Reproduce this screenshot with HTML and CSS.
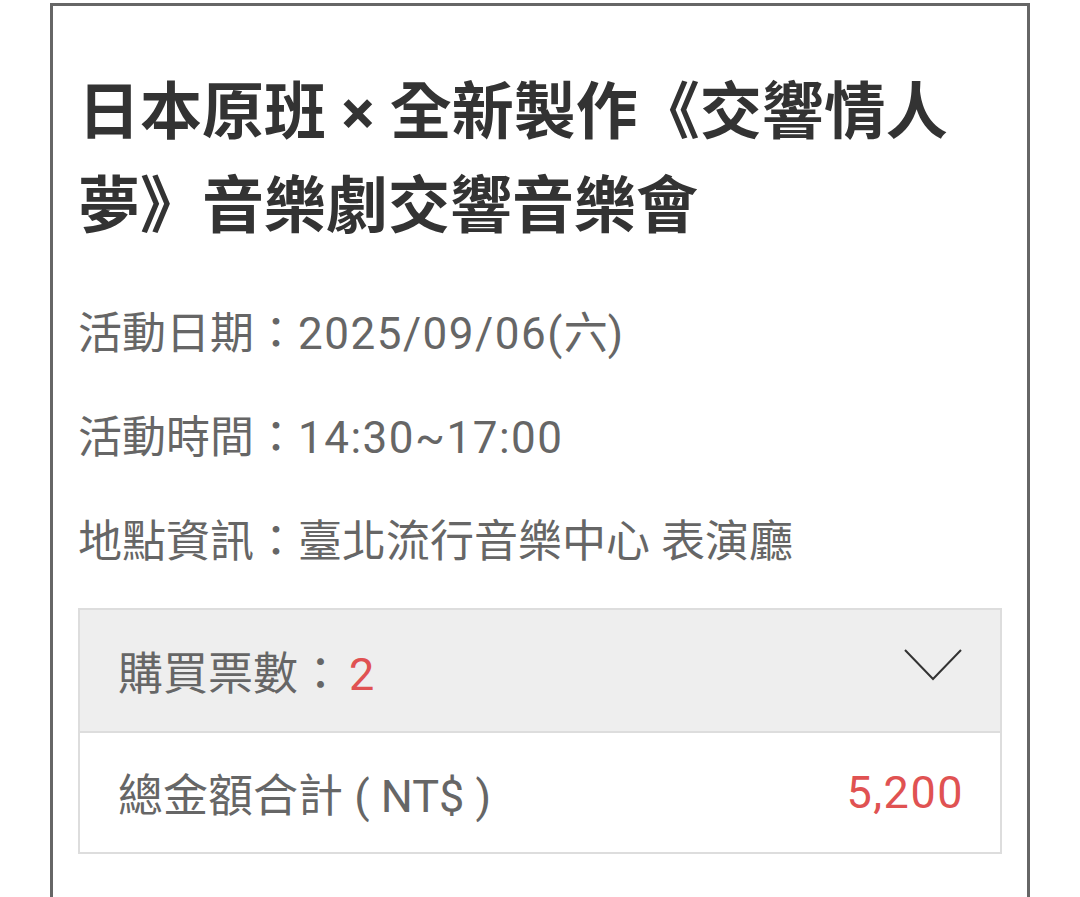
FILE: index.html
```html
<!DOCTYPE html>
<html lang="zh-Hant">
<head>
    <meta charset="UTF-8">
    <title>交響情人夢 音樂劇交響音樂會</title>
    <link rel="stylesheet" href="styles.css">
</head>
<body>

<div class="frame">
    <h1 class="event-title">日本原班 × 全新製作《交響情人夢》音樂劇交響音樂會</h1>

    <div class="info">
        <p>活動日期：<span class="num">2025/09/06(</span>六<span class="num">)</span></p>
        <p>活動時間：<span class="num">14:30~17:00</span></p>
        <p>地點資訊：臺北流行音樂中心 表演廳</p>
    </div>

    <div class="ticket-box">
        <div class="ticket-row qty">
            <span>購買票數：<em class="red num qty-num">2</em></span>
            <svg class="chevron" width="58" height="32" viewBox="0 0 58 32">
                <polyline points="1,1 29,30 57,1" fill="none" stroke="#333" stroke-width="2"/>
            </svg>
        </div>
        <div class="ticket-row total">
            <span>總金額合計 ( NT$ )</span>
            <span class="red num">5,200</span>
        </div>
    </div>
</div>

</body>
</html>
```

FILE: styles.css
```css
body {
    margin: 0;
    background-color: #fff;
    font-family: Roboto, "Noto Sans CJK TC", sans-serif;
}
.frame {
    box-sizing: border-box;
    width: 980px;
    min-height: 894px;
    margin: 3px 0 0 50px;
    padding: 60px 25px 0;
    border: 3px solid #666;
    border-bottom: none;
}
.event-title {
    margin: 0;
    font-size: 62px;
    line-height: 94px;
    font-weight: 700;
    color: #333;
}
.info {
    margin-top: 48px;
}
.info p {
    margin: 0 0 40px;
    font-size: 44px;
    line-height: 64px;
    color: #666;
}
.info p:last-child {
    margin-bottom: 34px;
}
.num {
    letter-spacing: 1.5px;
}
.ticket-box {
    border: 2px solid #ddd;
}
.ticket-row {
    display: flex;
    align-items: center;
    justify-content: space-between;
    padding: 0 36px 0 38px;
    font-size: 45px;
    color: #666;
}
.ticket-row.qty {
    height: 121px;
    background-color: #eee;
    border-bottom: 2px solid #ddd;
}
.ticket-row.total {
    height: 119px;
}
.red {
    color: #e05252;
    font-style: normal;
}
.qty-num {
    margin-left: 6px;
}
.chevron {
    display: block;
    margin: -12px 2px 0 0;
}
```
